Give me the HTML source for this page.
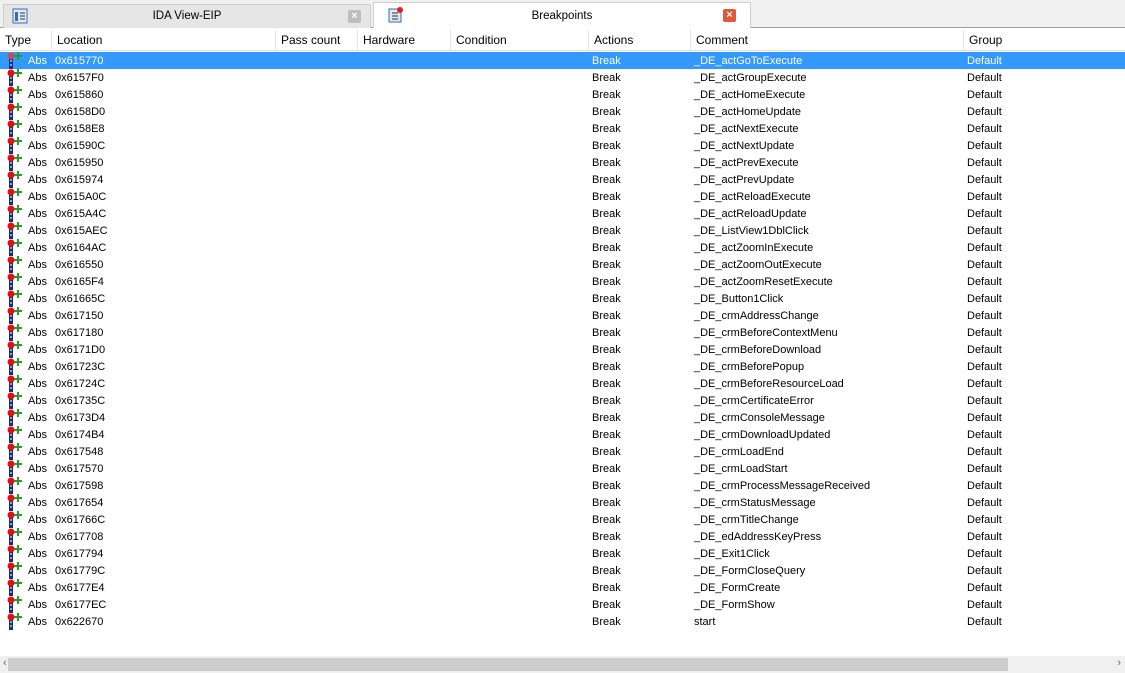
<!DOCTYPE html><html><head><style>
body{margin:0;width:1125px;height:673px;overflow:hidden;background:#fff;font-family:"Liberation Sans",sans-serif;font-size:11px;color:#000;position:relative}
.tabbar{position:absolute;left:0;top:0;width:1125px;height:27px;background:#f0f0f0;border-bottom:1px solid #a0a0a0}
.tab{position:absolute;top:4px;height:23px;text-align:center;line-height:23px;font-size:11.5px}
.t1{left:3px;width:366px;background:#e6e6e6;border:1px solid #cfcfcf;border-bottom:none}
.t2{left:373px;width:376px;top:2px;height:25px;line-height:26px;background:#fff;border:1px solid #cfcfcf;border-bottom:none}
.x{position:absolute;width:13px;height:13px;border-radius:2px;color:#fff;font-size:11px;line-height:13px;font-weight:bold}
.hdr{position:absolute;top:30px;left:0;width:1125px;height:20px;border-bottom:1px solid #e4e4e4}
.hdr div{position:absolute;top:0;height:20px;line-height:20px;font-size:12px;border-right:1px solid #e4e4e4;padding-left:5px;box-sizing:border-box}
.row{position:absolute;left:0;width:1125px;height:17px;line-height:17px}
.row span{position:absolute;top:1px}
.sel{background:#3399ff;color:#fff}
.ic{position:absolute;left:6px;top:0;width:18px;height:17px}
.sb{position:absolute;left:0;top:656px;width:1125px;height:17px;background:#f0f0f0}
</style></head><body>
<div class="tabbar">
<div class="tab t1"><svg style="position:absolute;left:8px;top:3px" width="16" height="16"><rect x="1" y="1" width="14" height="14" fill="#dfe9f5" stroke="#3a6ab0"/><rect x="3" y="4" width="3" height="9" fill="#3a6ab0"/><line x1="8" y1="5" x2="13" y2="5" stroke="#333"/><line x1="8" y1="8" x2="13" y2="8" stroke="#333"/><line x1="8" y1="11" x2="13" y2="11" stroke="#333"/></svg>IDA View-EIP<div class="x" style="left:344px;top:5px;background:#bdbdbd">×</div></div>
<div class="tab t2"><svg style="position:absolute;left:14px;top:4px" width="16" height="16"><rect x="1" y="2" width="12" height="13" fill="#dfe9f5" stroke="#3a6ab0"/><line x1="4" y1="6" x2="10" y2="6" stroke="#333"/><line x1="4" y1="9" x2="10" y2="9" stroke="#333"/><line x1="4" y1="12" x2="10" y2="12" stroke="#333"/><circle cx="12" cy="3" r="3" fill="#e02020"/></svg>Breakpoints<div class="x" style="left:349px;top:6px;background:#e05a3a">×</div></div>
</div>
<div class="hdr">
<div style="left:0;width:52px">Type</div><div style="left:52px;width:224px">Location</div><div style="left:276px;width:82px">Pass count</div><div style="left:358px;width:93px">Hardware</div><div style="left:451px;width:138px">Condition</div><div style="left:589px;width:102px">Actions</div><div style="left:691px;width:273px">Comment</div><div style="left:964px;width:161px;border:none">Group</div>
</div>
<div id="rows"></div>
<div class="sb"><div style="position:absolute;left:8px;top:2px;width:1000px;height:13px;background:#cdcdcd"></div><span style="position:absolute;left:3px;top:1px;color:#666">‹</span><span style="position:absolute;right:4px;top:1px;color:#666">›</span></div>
<script>
var d=[["615770","_DE_actGoToExecute"],["6157F0","_DE_actGroupExecute"],["615860","_DE_actHomeExecute"],["6158D0","_DE_actHomeUpdate"],["6158E8","_DE_actNextExecute"],["61590C","_DE_actNextUpdate"],["615950","_DE_actPrevExecute"],["615974","_DE_actPrevUpdate"],["615A0C","_DE_actReloadExecute"],["615A4C","_DE_actReloadUpdate"],["615AEC","_DE_ListView1DblClick"],["6164AC","_DE_actZoomInExecute"],["616550","_DE_actZoomOutExecute"],["6165F4","_DE_actZoomResetExecute"],["61665C","_DE_Button1Click"],["617150","_DE_crmAddressChange"],["617180","_DE_crmBeforeContextMenu"],["6171D0","_DE_crmBeforeDownload"],["61723C","_DE_crmBeforePopup"],["61724C","_DE_crmBeforeResourceLoad"],["61735C","_DE_crmCertificateError"],["6173D4","_DE_crmConsoleMessage"],["6174B4","_DE_crmDownloadUpdated"],["617548","_DE_crmLoadEnd"],["617570","_DE_crmLoadStart"],["617598","_DE_crmProcessMessageReceived"],["617654","_DE_crmStatusMessage"],["61766C","_DE_crmTitleChange"],["617708","_DE_edAddressKeyPress"],["617794","_DE_Exit1Click"],["61779C","_DE_FormCloseQuery"],["6177E4","_DE_FormCreate"],["6177EC","_DE_FormShow"],["622670","start"]];
var h="";d.forEach(function(r,i){h+='<div class="row'+(i==0?' sel':'')+'" style="top:'+(52+i*17)+'px"><svg class="ic" viewBox="0 0 18 17"><rect x="3" y="6" width="4" height="11" fill="#1a2a8a"/><rect x="4" y="8" width="2" height="2" fill="#8aa"/><rect x="4" y="12" width="2" height="2" fill="#8aa"/><circle cx="5" cy="4" r="3.5" fill="'+(i==0?'#c05060':'#e01010')+'"/><path d="M11 0h2v3h3v2h-3v3h-2v-3h-3v-2h3z" fill="#2a9a2a"/></svg><span style="left:28px">Abs</span><span style="left:55px">0x'+r[0]+'</span><span style="left:592px">Break</span><span style="left:694px">'+r[1]+'</span><span style="left:967px">Default</span></div>'});
document.getElementById("rows").innerHTML=h;
</script>
</body></html>
